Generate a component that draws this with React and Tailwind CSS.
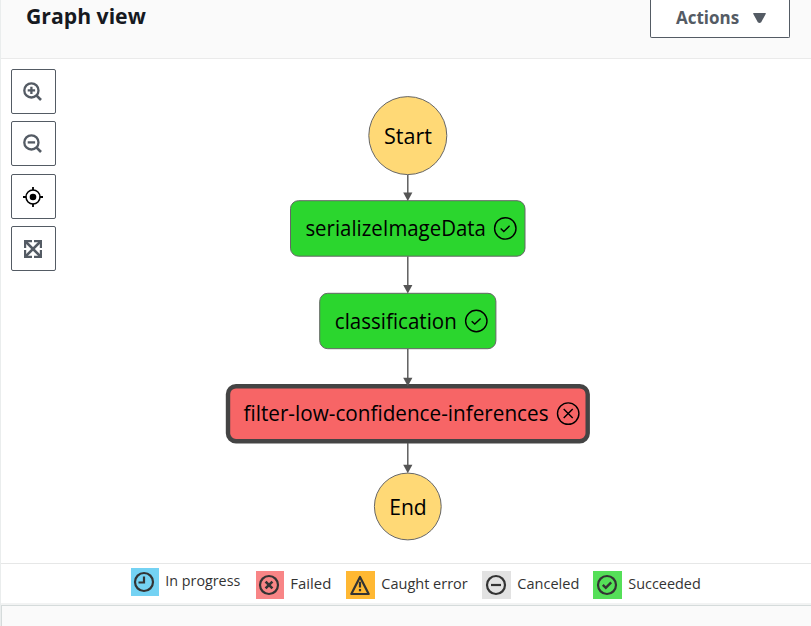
import React from "react";

const FONT = '"Open Sans", "Noto Sans", sans-serif';

function ToolButton({ label, children }) {
  return (
    <button
      aria-label={label}
      className="flex size-[45px] items-center justify-center rounded-[2px] border border-[#545b64] bg-white pr-[2px] text-[#545b64]"
    >
      {children}
    </button>
  );
}

function Magnifier({ plus }) {
  return (
    <svg width="19" height="19" viewBox="0 0 19 19" fill="none" stroke="currentColor">
      <circle cx="8.4" cy="8.4" r="7.1" strokeWidth="2.3" />
      <path d="M13.4 13.4l4.6 4.6" strokeWidth="2.6" />
      <path d={plus ? "M4.7 8.4h7.4M8.4 4.7v7.4" : "M4.7 8.4h7.4"} strokeWidth="2.3" />
    </svg>
  );
}

function Target() {
  return (
    <svg className="mt-px" width="20" height="20" viewBox="0 0 20 20" fill="none" stroke="#000">
      <circle cx="10" cy="10" r="7" strokeWidth="1.5" />
      <circle cx="10" cy="10" r="3.3" fill="#000" stroke="none" />
      <path d="M10 0v3.2M10 16.8V20M0 10h3.2M16.8 10H20" strokeWidth="1.8" />
    </svg>
  );
}

function Expand() {
  return (
    <svg width="18" height="18" viewBox="0 0 18 18" fill="none" stroke="currentColor" strokeWidth="2.2">
      <path d="M8 1.1H1.1V8M10 1.1h6.9V8M1.1 10v6.9H8M16.9 10v6.9H10" />
      <path d="M2 2l14 14M16 2L2 16" strokeWidth="2.5" />
    </svg>
  );
}

function Edge({ from, to }) {
  return (
    <g fill="#555" stroke="none">
      <path d={`M407.8 ${from}V${to - 7}`} stroke="#555" strokeWidth="1.4" />
      <path d={`M403.2 ${to - 8.6}h9.2l-4.6 8.6z`} />
    </g>
  );
}

function NodeText({ x, y, width, children }) {
  return (
    <text x={x} y={y} fontSize="21" textLength={width} lengthAdjust="spacingAndGlyphs" fill="#000">
      {children}
    </text>
  );
}

function NodeStatus({ x, y, failed }) {
  return (
    <g transform={`translate(${x} ${y})`} fill="none" stroke="#000" strokeWidth="1.4">
      <circle r="10.7" />
      <path d={failed ? "M-4.5-4.5l9 9M4.5-4.5l-9 9" : "M-4.6.2l3.1 2.9L4.3-2.6"} />
    </g>
  );
}

function Graph() {
  return (
    <svg className="absolute left-0 top-0" width="810" height="504" viewBox="1 59 810 504">
      <g stroke="#666" strokeWidth="1">
        <circle cx="407.8" cy="135.6" r="39" fill="#ffd976" />
        <rect x="290.5" y="200.7" width="234.5" height="55.5" rx="8" fill="#2bd62e" />
        <rect x="319.7" y="293.3" width="176.2" height="55.4" rx="8" fill="#2bd62e" />
        <rect x="228" y="386.2" width="359.7" height="55" rx="8" fill="#f76566" stroke="#444" strokeWidth="4.4" />
        <circle cx="407.8" cy="506.5" r="33.4" fill="#ffd976" />
      </g>
      <Edge from={175} to={201} />
      <Edge from={256.5} to={293.5} />
      <Edge from={349} to={386.3} />
      <Edge from={443} to={473.3} />
      <NodeText x={384} y={144.4} width={48}>Start</NodeText>
      <NodeText x={305.4} y={236.4} width={180.5}>serializeImageData</NodeText>
      <NodeText x={334.8} y={329.2} width={122}>classification</NodeText>
      <NodeText x={243.5} y={421} width={305}>filter-low-confidence-inferences</NodeText>
      <NodeText x={389.2} y={515} width={37.5}>End</NodeText>
      <NodeStatus x={505.3} y={228.4} />
      <NodeStatus x={476.3} y={321} />
      <NodeStatus x={568.2} y={413.6} failed />
    </svg>
  );
}

const ring = <circle r="9" />;

const LEGEND = [
  {
    label: "In progress",
    box: "w-[125px]",
    swatch: "w-7 bg-[#74d2f3]",
    width: 75,
    icon: <>{ring}<path d="M0-5.5V.5H-5.5" /></>,
  },
  {
    label: "Failed",
    box: "mt-[3px] w-[90px]",
    swatch: "w-7 bg-[#f88586]",
    width: 41,
    icon: <>{ring}<path d="M-3.4-3.4l6.8 6.8M3.4-3.4l-6.8 6.8" strokeWidth="2.6" /></>,
  },
  {
    label: "Caught error",
    box: "mt-[3px] w-[136px]",
    swatch: "w-[29px] bg-[#ffb833]",
    width: 86.5,
    icon: <><path d="M0-8L8.7 9H-8.7z" strokeLinejoin="round" /><path d="M0-3.2V2.5M0 4V6.3" /></>,
  },
  {
    label: "Canceled",
    box: "mt-[3px] w-[111px]",
    swatch: "w-[29px] bg-[#e2e2e2]",
    width: 62,
    icon: <>{ring}<path d="M-5 0H5" /></>,
  },
  {
    label: "Succeeded",
    box: "mt-[3px] w-[115px]",
    swatch: "w-[29px] bg-[#55df58]",
    width: 72.5,
    icon: <>{ring}<path d="M-4.2-.2l3 3L4.2-2.6" strokeWidth="2.4" /></>,
  },
];

function Legend() {
  return (
    <div className="flex h-[40px] shrink-0 items-start border-t border-[#e6e7e7] bg-white pl-[130px] pt-1">
      {LEGEND.map((item) => (
        <div key={item.label} className={`flex h-7 shrink-0 ${item.box}`}>
          <span className={`flex h-7 shrink-0 items-center justify-center pr-[2px] ${item.swatch}`}>
            <svg width="22" height="22" viewBox="-11 -11 22 22" fill="none" stroke="#333" strokeWidth="2.2">
              {item.icon}
            </svg>
          </span>
          <svg className="ml-[5px] shrink-0 overflow-visible" width={item.width + 4} height="28">
            <text x="1.3" y="18.3" fontSize="15" fill="#333" textLength={item.width} lengthAdjust="spacingAndGlyphs">
              {item.label}
            </text>
          </svg>
        </div>
      ))}
    </div>
  );
}

export default function App() {
  return (
    <div className="flex h-[626px] w-[811px] flex-col overflow-hidden border-l border-[#eaeded] bg-white" style={{ fontFamily: FONT }}>
      <header className="flex h-[59px] shrink-0 items-start justify-between border-b border-[#eaeaea] bg-[#fafafa] pl-[25px] pr-[21px]">
        <h2 className="whitespace-nowrap text-[21.2px] font-bold leading-[32px] text-[#16191f]">
          Graph view
        </h2>
        <button className="flex h-[38px] w-[140px] items-start rounded-b-[2px] border border-t-0 border-[#545b64] bg-white pl-[25px] text-[#545b64]">
          <span className="w-[77px] whitespace-nowrap text-left text-[17px] font-bold leading-[36px]">Actions</span>
          <svg className="mt-[13px]" width="13" height="10" viewBox="0 0 13 10" fill="currentColor">
            <path d="M.7 0H12.3Q13.2.2 12.7 1L8.2 9.2Q6.5 10.8 4.8 9.2L.3 1Q-.2.2.7 0z" />
          </svg>
        </button>
      </header>
      <main className="relative h-[504px] shrink-0 bg-white">
        <Graph />
        <div className="relative flex w-[55px] flex-col gap-[7.4px] pl-[10px] pt-[10px]">
          <ToolButton label="Zoom in"><Magnifier plus /></ToolButton>
          <ToolButton label="Zoom out"><Magnifier /></ToolButton>
          <ToolButton label="Center"><Target /></ToolButton>
          <ToolButton label="Fit"><Expand /></ToolButton>
        </div>
      </main>
      <Legend />
      <div className="h-[2px] shrink-0 bg-[#f2f3f3]" />
      <footer className="flex-1 border-l border-t border-[#d5dbdb] bg-[#fafafa]" />
    </div>
  );
}
